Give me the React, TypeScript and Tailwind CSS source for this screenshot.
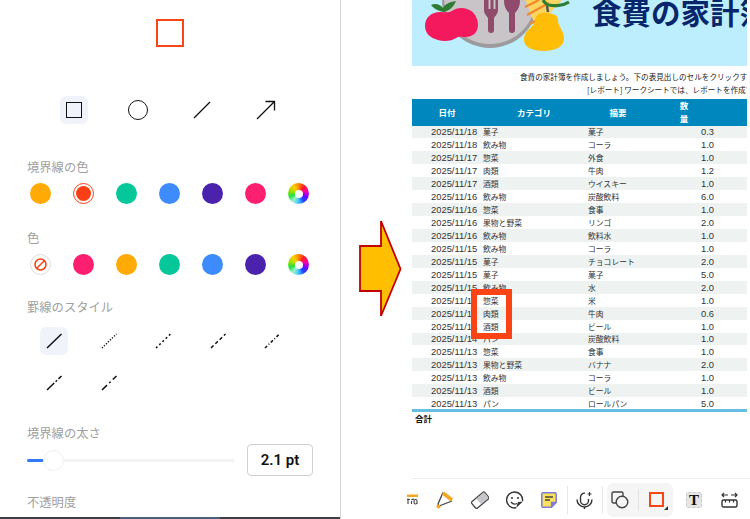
const JP = "font-['Noto_Sans_CJK_JP','Noto_Sans',sans-serif]";
const rows = [
  ["2025/11/18","菓子","菓子","0.3"],["2025/11/18","飲み物","コーラ","1.0"],["2025/11/17","惣菜","外食","1.0"],
  ["2025/11/17","肉類","牛肉","1.2"],["2025/11/17","酒類","ウイスキー","1.0"],["2025/11/16","飲み物","炭酸飲料","6.0"],
  ["2025/11/16","惣菜","食事","1.0"],["2025/11/16","果物と野菜","リンゴ","2.0"],["2025/11/16","飲み物","飲料水","1.0"],
  ["2025/11/15","飲み物","コーラ","1.0"],["2025/11/15","菓子","チョコレート","2.0"],["2025/11/15","菓子","菓子","5.0"],
  ["2025/11/15","飲み物","水","2.0"],["2025/11/14","惣菜","米","1.0"],["2025/11/14","肉類","牛肉","0.6"],
  ["2025/11/14","酒類","ビール","1.0"],["2025/11/14","パン","炭酸飲料","1.0"],["2025/11/13","惣菜","食事","1.0"],
  ["2025/11/13","果物と野菜","バナナ","2.0"],["2025/11/13","飲み物","コーラ","1.0"],["2025/11/13","酒類","ビール","1.0"],
  ["2025/11/13","パン","ロールパン","5.0"],
];
const wheel = "conic-gradient(#ff8a00,#ff2020,#ff00a0,#8000ff,#2040ff,#40c8ff,#a0f0d0,#20e040,#a0e000,#ffd000,#ff8a00)";
function Wheel() {
  return <div className="w-[21px] h-[21px] rounded-full flex items-center justify-center" style={{background:wheel}}><div className="w-[8px] h-[8px] rounded-full bg-white"/></div>;
}
function Dot({c}:{c:string}) { return <div className="w-[21px] h-[21px] rounded-full" style={{background:c}}/>; }
function Label({t,cls}:{t:string;cls:string}) { return <div className={`text-[12.300px] leading-[18px] text-[#a0a0a0] ${cls}`}>{t}</div>; }
const dashes = ["0","1.2 1.6","2 2.5","3.5 2.5","3 2 1 2","10 2 2 2","7 3 2 3"];
function StyleLine({d,active}:{d:string;active?:boolean}) {
  return <div className={`w-[28px] h-[28px] rounded-[6px] flex items-center justify-center ${active?"bg-[#f0f3f9]":""}`}>
    <svg width="18" height="18" viewBox="0 0 18 18"><line x1="2" y1="16" x2="16.5" y2="2" stroke="#111" strokeWidth="1.5" strokeDasharray={d==="0"?undefined:d}/></svg>
  </div>;
}
function Banner() {
  return <div className="h-[66px] bg-[#bdeefd] relative overflow-hidden">
    <svg className="absolute left-0 top-0" width="160" height="66" viewBox="0 0 160 66">
      <circle cx="78" cy="0" r="48" fill="#9c9a9d"/><circle cx="78" cy="-2" r="46" fill="#c9c4c8"/>
      <path d="M72 0v10c0 4 3 6 4 8v12a3 3 0 0 0 6 0V18c1-2 4-4 4-8V0h-2.500v9h-2V0h-3v9h-2V0z" fill="#8f4a6c"/>
      <path d="M92 0c0 6 2 10 5 13v17a3 3 0 0 0 6 0V13c3-3 5-7 5-13z" fill="#8f4a6c"/>
      <path d="M113 -2 L152 -2 L124 28 Z" fill="#fbd55f"/>
      <path d="M113 7l14 -7M115 15l22 -12M118 24l14 -8" stroke="#f08a2c" strokeWidth="2.200" fill="none"/>
      <path d="M13 26c0-9 7-14 15-14 5 0 9 1 12-1 4-3 10-4 15-2 7 2 11 9 11 16 0 8-6 12-12 12-5 0-7-1-10 1-4 3-12 4-18 2-8-2-13-7-13-14z" fill="#f4195d"/>
      <path d="M31 12c-4-1-9-3-12-7 4-2 9-1 12 3 1-3 6-6 13-7-2 5-6 10-13 11z" fill="#2e7d32"/>
      <path d="M136 12l-1-6" stroke="#555" strokeWidth="2.500"/>
      <path d="M134 13c-7-1-11 3-11 8 0 6-11 8-11 19 0 7 8 11 20 11s20-5 20-12c0-9-6-12-6-19 0-5-5-7-12-7z" fill="#ffbd07"/>
      <path d="M131 0c2 3 4 5 6 5M137 5c5 1 14 1 20-3" stroke="#2e7d32" strokeWidth="3.200" fill="none"/>
    </svg>
    <div className={`absolute left-[180px] top-[-9px] text-[29.500px] leading-[40px] font-bold text-[#08266b] whitespace-nowrap ${JP}`}>食費の家計簿</div>
  </div>;
}
function Toolbar() {
  return <div className="mt-auto w-[338px] h-[41px] border-t border-[#eeeeee] pt-[1px] flex items-center">
    <div className="w-[15px] flex justify-start">
      <svg className="-ml-[5px] shrink-0" width="11" height="11" viewBox="0 0 11 11"><rect x="0" y="0.500" width="11" height="2.500" fill="#f5a623"/><path d="M1 4.500v5.500M0 5.500h3M4.500 7v3M4.500 6c1-1 2-1 2.500-1M10 10V7a1.500 1.500 0 0 0-3 0v1.500a1.500 1.500 0 0 0 3 0" stroke="#444" strokeWidth="1.100" fill="none"/></svg>
    </div>
    <div className="w-[35px] flex justify-center">
      <svg width="18" height="18" viewBox="0 0 18 18"><path d="M7 1.500L2 13l1 2 13-5" stroke="#444" strokeWidth="1.300" fill="none"/><path d="M7 2l9 7" stroke="#f5a623" strokeWidth="3.600"/><circle cx="2.500" cy="15.500" r="2" fill="#f5a623"/></svg>
    </div>
    <div className="w-[35px] flex justify-center">
      <svg width="18" height="18" viewBox="0 0 18 18"><g transform="rotate(-40 9 9)"><rect x="0.500" y="5" width="17" height="8.500" rx="1.500" fill="#fff" stroke="#444" strokeWidth="1.300"/><rect x="7" y="5.700" width="10" height="7" fill="#c4c6cc"/></g></svg>
    </div>
    <div className="w-[35px] flex justify-center">
      <svg width="18" height="18" viewBox="0 0 18 18"><path d="M16.500 10A8 8 0 1 0 10 16.800" stroke="#333" strokeWidth="1.400" fill="none"/><circle cx="6" cy="7" r="1" fill="#333"/><circle cx="12" cy="7" r="1" fill="#333"/><path d="M5 11c1.500 2 4 2.500 6 1.500" stroke="#333" strokeWidth="1.300" fill="none"/><path d="M10 17l7-6.500-5 .5z" fill="#333"/></svg>
    </div>
    <div className="w-[33px] flex justify-center">
      <svg width="16" height="16" viewBox="0 0 16 16"><path d="M2 .8h12a1.200 1.200 0 0 1 1.200 1.200v8.500L10.500 15.200H2A1.200 1.200 0 0 1 .8 14V2A1.200 1.200 0 0 1 2 .8z" fill="#fde05b" stroke="#7d7cd8" strokeWidth="1.500"/><path d="M4 5h8M4 8h5" stroke="#444" strokeWidth="1.300"/><path d="M10.500 15v-4.500H15" stroke="#7d7cd8" strokeWidth="1.300" fill="#7d7cd8"/></svg>
    </div>
    <div className="w-px h-[28px] bg-[#e8e8e8] ml-[2px]"/>
    <div className="w-[32px] flex justify-center">
      <svg width="17" height="18" viewBox="0 0 17 18"><path d="M9 2.200a4 4 0 0 0-4.500 4v3.500a4 4 0 0 0 8 0V8" stroke="#333" strokeWidth="1.400" fill="none"/><path d="M1 8.500a7.500 7.500 0 0 0 15 0M8.500 16v2" stroke="#333" strokeWidth="1.400" fill="none"/><path d="M13.500 1v4M11.500 3h4" stroke="#333" strokeWidth="1.200"/></svg>
    </div>
    <div className="w-px h-[28px] bg-[#e8e8e8] ml-[2px]"/>
    <div className="ml-[4px] w-[66px] h-[34px] rounded-[7px] bg-[#f5f5f5] flex items-center">
      <div className="w-[26px] flex justify-center">
        <svg width="18" height="18" viewBox="0 0 18 18"><path d="M5 12H2.500A1.500 1.500 0 0 1 1 10.500v-8A1.500 1.500 0 0 1 2.500 1h8A1.500 1.500 0 0 1 12 2.500V5" stroke="#444" strokeWidth="1.400" fill="none"/><circle cx="11" cy="11" r="5.800" stroke="#444" strokeWidth="1.400" fill="none"/></svg>
      </div>
      <div className="ml-[5px] w-px h-[22px] bg-[#e2e2e2]"/>
      <div className="w-[34px] flex justify-center relative">
        <div className="w-[15px] h-[15px] border-2 border-[#fa4616]"/>
        <svg className="absolute right-[5px] bottom-[-3px]" width="4" height="4" viewBox="0 0 4 4"><path d="M4 0V4H0Z" fill="#333"/></svg>
      </div>
    </div>
    <div className="w-[42px] flex justify-center">
      <div className="w-[16px] h-[16px] rounded-[2px] bg-[#e6e6e6] border border-dashed border-[#cccccc] flex items-center justify-center text-[15px] leading-[14px] font-bold text-[#111] font-['Liberation_Serif',serif]">T</div>
    </div>
    <div className="w-[28px] flex justify-center">
      <svg width="17" height="17" viewBox="0 0 17 17"><path d="M1 4h6M10 4h6M3 2L1 4l2 2M14 2l2 2-2 2" stroke="#333" strokeWidth="1.200" fill="none"/><rect x="1" y="9" width="15" height="7" rx="1.500" stroke="#333" strokeWidth="1.400" fill="none"/><path d="M4.500 9v2.500M8.500 9v2.500M12.500 9v2.500" stroke="#333" strokeWidth="1.200"/></svg>
    </div>
  </div>;
}
export default function App() {
  return (
    <div className={`w-[750px] h-[519px] bg-white flex overflow-hidden ${JP}`}>
      <div className="w-[341px] h-[519px] border-r border-[#d4d4d4] flex flex-col relative overflow-hidden">
        <div className="h-[96px] flex justify-center pt-[19px] pr-[1px]">
          <div className="w-[28px] h-[28px] border-2 border-[#fa4616]"/>
        </div>
        <div className="flex h-[28px] pl-[60px] gap-[36px]">
          <div className="w-[28px] h-[28px] rounded-[6px] bg-[#f0f3f9] flex items-center justify-center"><div className="w-[16px] h-[16px] border-[1.500px] border-[#111]"/></div>
          <div className="w-[28px] h-[28px] flex items-center justify-center"><div className="w-[20px] h-[20px] rounded-full border-[1.500px] border-[#111]"/></div>
          <div className="w-[28px] h-[28px] flex items-center justify-center"><svg width="18" height="18" viewBox="0 0 18 18"><line x1="1" y1="17" x2="17" y2="1" stroke="#111" strokeWidth="1.300"/></svg></div>
          <div className="w-[28px] h-[28px] flex items-center justify-center"><svg width="20" height="20" viewBox="0 0 20 20"><path d="M1 19L18.500 1.500M9.500 1.500h9v9" stroke="#111" strokeWidth="1.300" fill="none"/></svg></div>
        </div>
        <Label t="境界線の色" cls="ml-[27px] mt-[34px]"/>
        <div className="flex ml-[30px] gap-[22px] mt-[7px]">
          <Dot c="#ffaa05"/>
          <div className="w-[21px] h-[21px] rounded-full border border-[#fa3f16] flex items-center justify-center"><div className="w-[15px] h-[15px] rounded-full bg-[#fa3f16]"/></div>
          <Dot c="#05c79a"/><Dot c="#3d8bfd"/><Dot c="#4a22ab"/><Dot c="#ff1f70"/><Wheel/>
        </div>
        <Label t="色" cls="ml-[27px] mt-[25px]"/>
        <div className="flex ml-[30px] gap-[22px] mt-[7px]">
          <div className="w-[21px] h-[21px] rounded-full border border-[#dddddd] flex items-center justify-center">
            <svg width="15" height="15" viewBox="0 0 15 15"><circle cx="7.500" cy="7.500" r="5.500" stroke="#fa3f16" strokeWidth="1.500" fill="none"/><line x1="3.500" y1="11.500" x2="11.500" y2="3.500" stroke="#fa3f16" strokeWidth="1.500"/></svg>
          </div>
          <Dot c="#ff1f70"/><Dot c="#ffaa05"/><Dot c="#05c79a"/><Dot c="#3d8bfd"/><Dot c="#4a22ab"/><Wheel/>
        </div>
        <Label t="罫線のスタイル" cls="ml-[27px] mt-[23px]"/>
        <div className="grid grid-cols-[repeat(5,28px)] gap-x-[26.500px] gap-y-[14px] ml-[40px] mt-[11px]">
          {dashes.map((d,i)=><StyleLine key={i} d={d} active={i===0}/>)}
        </div>
        <Label t="境界線の太さ" cls="ml-[27px] mt-[27px]"/>
        <div className="flex items-center ml-[27px] mt-[2px]">
          <div className="w-[207px] h-[3px] bg-[#f2f2f2] relative">
            <div className="w-[17px] h-[3px] bg-[#2f7cf6] rounded-full"/>
            <div className="absolute left-[16px] top-[-9px] w-[21px] h-[21px] rounded-full bg-white border border-[#f0f0f0]"/>
          </div>
          <div className="ml-[13px] w-[66px] h-[32px] border border-[#cfcfcf] rounded-[4px] flex items-center justify-center text-[15px] font-semibold text-[#111] font-['Roboto',sans-serif]">2.1 pt</div>
        </div>
        <Label t="不透明度" cls="ml-[27px] mt-[17px]"/>
        <div className="absolute left-0 bottom-0 w-full h-[2px] bg-[#3c3f46]"/>
        <div className="absolute left-[120px] bottom-0 w-[100px] h-[2px] bg-[#46617f]"/>
      </div>

      <div className="w-[71px] pt-[219px] pl-[17px] shrink-0">
        <svg width="44" height="99" viewBox="0 0 44 99"><path d="M2 27H23V2L42.500 50 23 97V72H2Z" fill="#ffbe00" stroke="#c00000" strokeWidth="1.800"/></svg>
      </div>

      <div className="w-[338px] h-[519px] flex flex-col relative">
        <div className="w-[335px]">
          <Banner/>
          <div className="h-[33px] text-[7.600px] leading-[12.500px] text-[#222] pt-[5px] pl-[108px] whitespace-nowrap overflow-hidden">
            <div>食費の家計簿を作成しましょう。下の表見出しのセルをクリックすると</div>
            <div className="pl-[67px]">[レポート] ワークシートでは、レポートを作成できます</div>
          </div>
          <div className="h-[26.500px] bg-[#0087bd] text-white text-[8.500px] font-bold flex items-center">
            <div className="w-[70px] text-center">日付</div>
            <div className="w-[104px] text-center">カテゴリ</div>
            <div className="w-[64px] text-center">摘要</div>
            <div className="w-[10px] ml-[29px] text-center leading-[13px]">数量</div>
          </div>
          {rows.map((r,i)=>(
            <div key={i} className={`h-[12.950px] flex items-center text-[7.800px] leading-[13px] text-[#333] whitespace-nowrap ${i%2===0?"bg-[#eef3f1]":""}`}>
              <div className="w-[52px] ml-[19px] text-[9.400px] font-['Liberation_Sans',sans-serif]">{r[0]}</div>
              <div className="w-[105px]">{r[1]}</div>
              <div className="w-[109px]">{r[2]}</div>
              <div className="w-[17px] text-right text-[9.400px] font-['Liberation_Sans',sans-serif]">{r[3]}</div>
            </div>
          ))}
          <div className="h-[3px] bg-[#66bfe0] -mt-[1px]"/>
          <div className="text-[8.500px] leading-[13px] font-bold text-[#111] pl-[3px]">合計</div>
        </div>
        <Toolbar/>
        <div className="absolute left-[59px] top-[289px] w-[41px] h-[50px] border-[6px] border-[#fb4416]"/>
      </div>
    </div>
  );
}
